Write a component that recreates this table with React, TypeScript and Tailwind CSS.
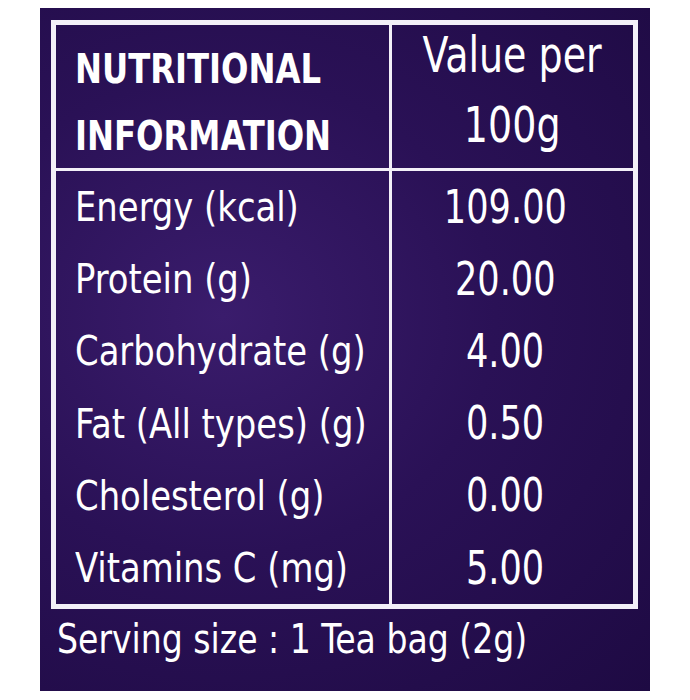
const rows = [
  { label: 'Energy (kcal)', value: '109.00' },
  { label: 'Protein (g)', value: '20.00' },
  { label: 'Carbohydrate (g)', value: '4.00' },
  { label: 'Fat (All types) (g)', value: '0.50' },
  { label: 'Cholesterol (g)', value: '0.00' },
  { label: 'Vitamins C (mg)', value: '5.00' },
];

// condensed face, narrowed a little further with scale-x to match the label print
const font = { fontFamily: '"DejaVu Sans Condensed", "Liberation Sans", sans-serif' };

export default function App() {
  return (
    <div className="min-h-[700px] w-[690px] bg-white pt-2 pl-10" style={font}>
      <div className="flex h-[683px] w-[610px] flex-col bg-[radial-gradient(ellipse_at_30%_45%,#3a1c6c_0%,#2a1156_45%,#1e0a43_100%)] px-[11px] pt-3 text-white">
        {/* Table */}
        <div className="w-[587px] border-[5px] border-[#f3f0f8]">
          <div className="flex h-[146px] border-b-[3px] border-[#f3f0f8]">
            <div className="flex h-full w-[336px] flex-col justify-center border-r-[3px] border-[#f3f0f8] pl-[19px] pt-[12px] text-[41px] font-bold leading-[67px]">
              <span className="inline-block origin-left scale-x-[0.875] whitespace-nowrap">NUTRITIONAL</span>
              <span className="inline-block origin-left scale-x-[0.875] whitespace-nowrap">INFORMATION</span>
            </div>
            <div className="flex h-full flex-1 flex-col items-center justify-center pb-[14px] text-[50px] leading-[70px]">
              <span className="inline-block scale-x-[0.845] whitespace-nowrap">Value per</span>
              <span className="inline-block scale-x-[0.845] whitespace-nowrap">100g</span>
            </div>
          </div>
          <div className="flex">
            <div className="w-[336px] border-r-[3px] border-[#f3f0f8] pl-[19px]">
              {rows.map(r => (
                <div key={r.label} className="flex h-[72.2px] items-center text-[40px]">
                  <span className="inline-block origin-left scale-x-[0.94] whitespace-nowrap">{r.label}</span>
                </div>
              ))}
            </div>
            <div className="flex-1 pr-[14px]">
              {rows.map(r => (
                <div key={r.label} className="flex h-[72.2px] items-center justify-center text-[46px]">
                  <span className="inline-block scale-x-[0.85] whitespace-nowrap">{r.value}</span>
                </div>
              ))}
            </div>
          </div>
        </div>

        {/* Serving size */}
        <div className="pl-[6px] pt-[7px] text-[40px] leading-[46px]">
          <span className="inline-block origin-left scale-x-[0.92] whitespace-nowrap">Serving size : 1 Tea bag (2g)</span>
        </div>
      </div>
    </div>
  );
}
